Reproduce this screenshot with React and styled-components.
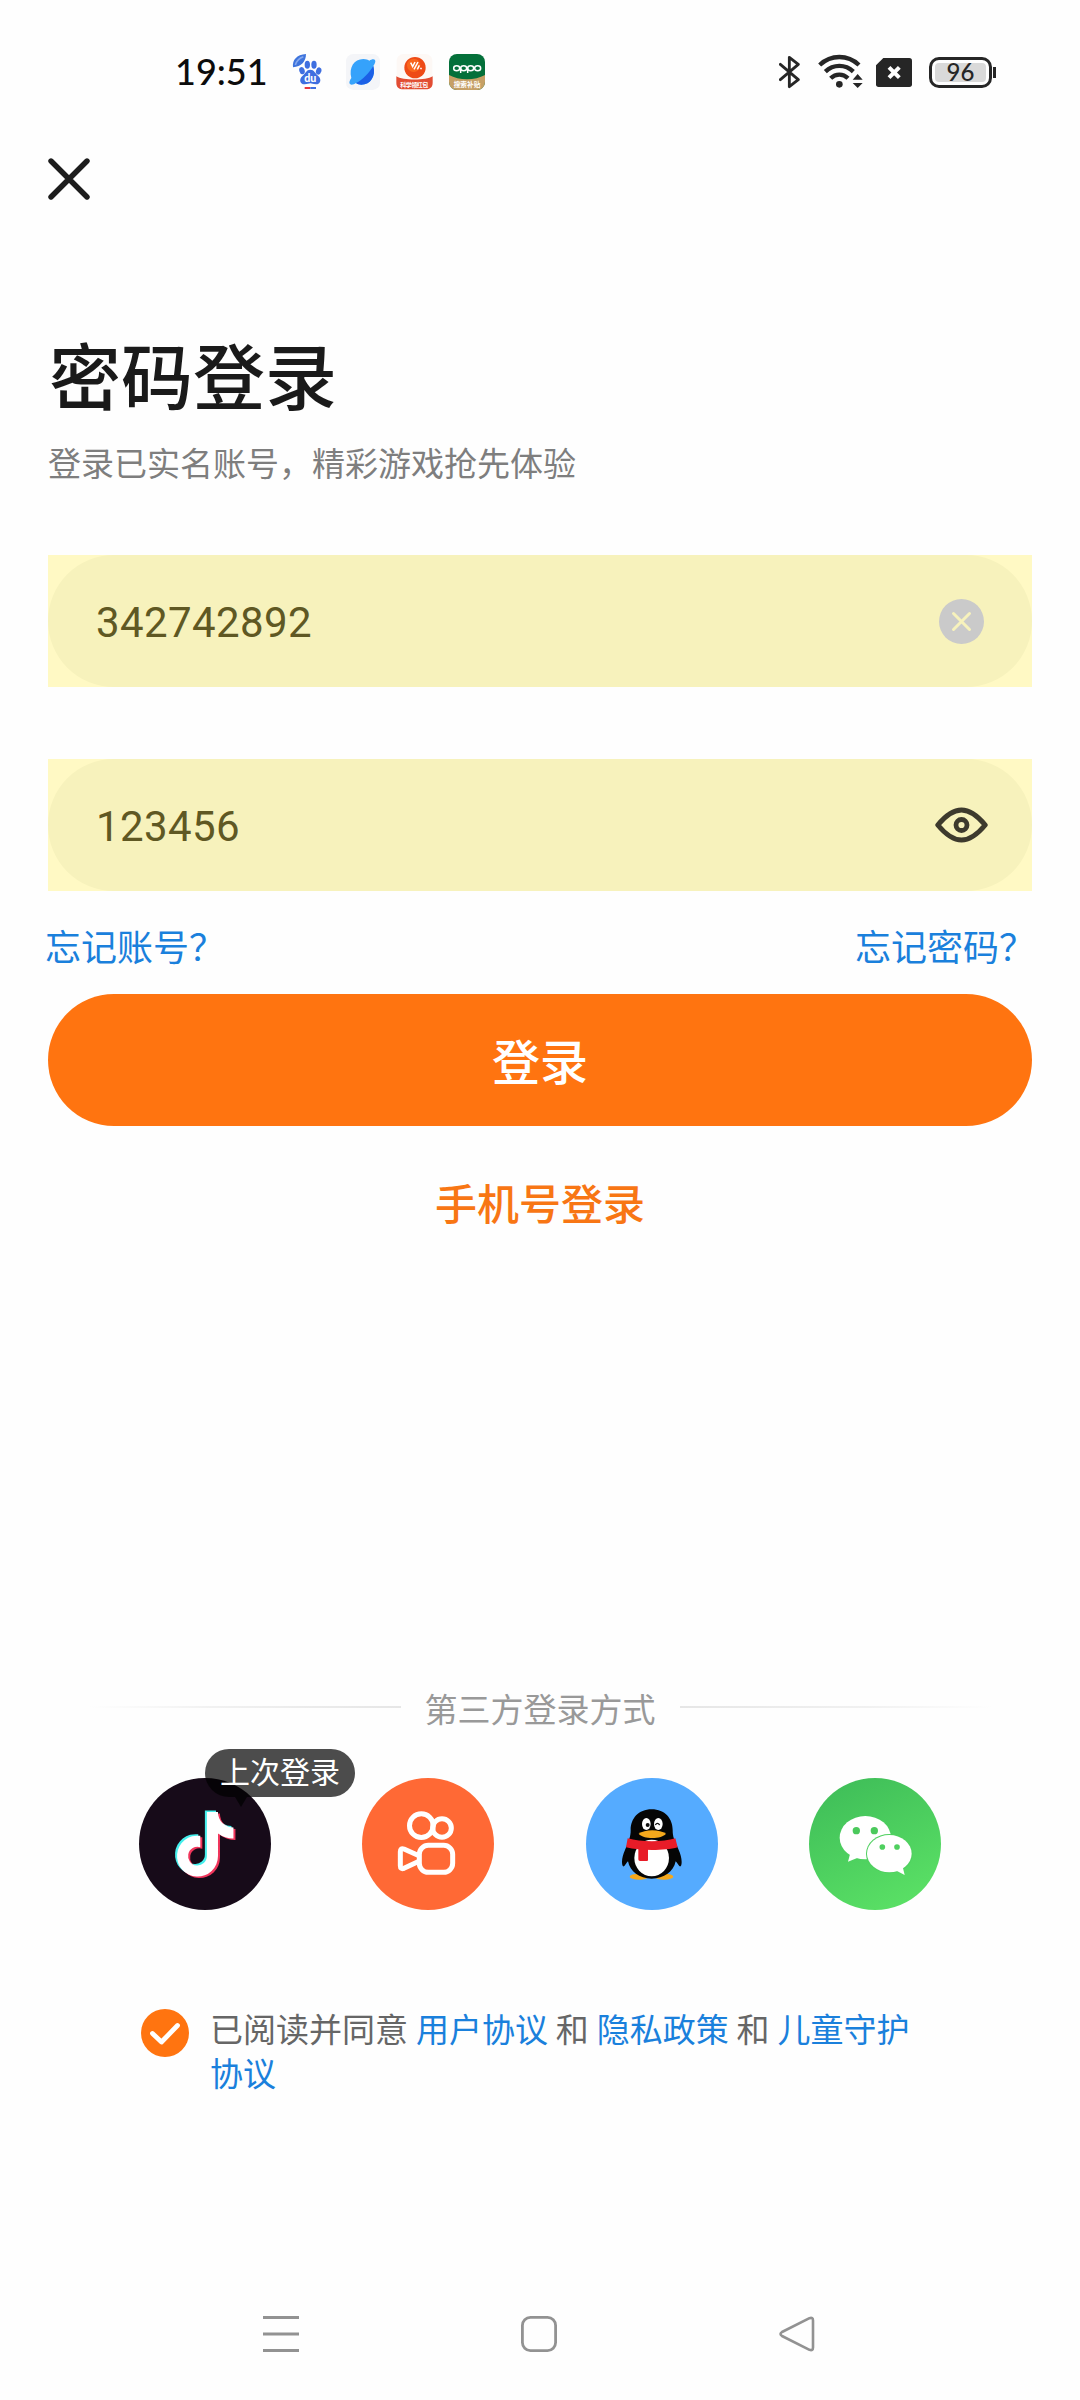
import React, { useState } from 'react';
import styled, { createGlobalStyle } from 'styled-components';

const GlobalStyle = createGlobalStyle`
  * {
    box-sizing: border-box;
  }

  body {
    margin: 0;
    background: #fefefe;
    font-family: 'Noto Sans CJK SC', sans-serif;
  }
`;

// Status bar icons
const BaiduIcon = () => (
  <svg width='30' height='36' viewBox='0 0 90 108'>
    <path d='M3 40C0 18 14 2 42 0C42 22 28 38 3 40Z' fill='#3f74dc' />
    <path d='M10 33C14 20 22 12 34 8' stroke='#86a9ee' strokeWidth='5' fill='none' />
    <g fill='#3f6fe0'>
      <ellipse cx='30' cy='50' rx='8' ry='11' transform='rotate(-18 30 50)' />
      <ellipse cx='46' cy='32' rx='8' ry='12' />
      <ellipse cx='66' cy='32' rx='8' ry='12' />
      <ellipse cx='80' cy='51' rx='8' ry='11' transform='rotate(18 80 51)' />
      <path d='M55 47C67 47 69 58 78 65C90 75 86 91 72 91C62 91 60 88 55 88C50 88 47 91 38 91C23 91 20 75 32 65C41 58 43 47 55 47Z' />
    </g>
    <text x='55' y='84' fontSize='32' fontWeight='900' fill='#fff' textAnchor='middle' fontFamily='Lato, sans-serif'>du</text>
    <path d='M38 102H55' stroke='#e5373f' strokeWidth='6' />
    <path d='M55 102H72' stroke='#3f6fe0' strokeWidth='6' />
  </svg>
);

const BrowserIcon = () => (
  <svg width='34' height='36' viewBox='0 0 102 108'>
    <rect width='102' height='108' rx='22' fill='#f4f5f8' />
    <path d='M12 90C8 86 12 78 16 72C8 40 24 16 52 15C60 15 66 18 70 20C76 16 84 14 87 18C90 22 86 30 82 36C90 66 74 92 46 92C40 92 34 90 30 87C24 91 16 94 12 90Z' fill='#35a2fb' />
    <path d='M82 36C90 66 74 92 46 92C40 92 34 90 30 87C50 78 70 56 82 36Z' fill='#1b5fe6' />
  </svg>
);

const PromoIcon = () => (
  <svg width='37' height='36' viewBox='0 0 111 108'>
    <rect x='2' width='107' height='106' rx='20' fill='#fdf8f5' />
    <circle cx='57' cy='41' r='32' fill='#ee4a16' />
    <circle cx='53' cy='34' r='20' fill='#f9661c' />
    <path d='M44 26L50 38L57 24M54 46L66 24M64 46L70 34M74 46L76 41' stroke='#fff' strokeWidth='4.5' fill='none' />
    <path d='M1 67C20 80 90 80 110 67V86C110 100 101 106 90 106H22C9 106 1 100 1 86Z' fill='#e24d33' />
    <text x='55' y='98' fontSize='18' fontWeight='700' fill='#fff' textAnchor='middle' textLength='84' fontFamily='"Noto Sans CJK SC", sans-serif'>科学领红包</text>
  </svg>
);

const OppoIcon = () => (
  <svg width='36' height='36' viewBox='0 0 108 108'>
    <defs>
      <clipPath id='oppo'>
        <rect width='108' height='108' rx='24' />
      </clipPath>
    </defs>
    <g clipPath='url(#oppo)'>
      <rect width='108' height='108' fill='#04703a' />
      <path d='M0 63C30 80 78 80 108 63V108H0Z' fill='#c6a066' />
    </g>
    <g fill='none' stroke='#fff' strokeWidth='4.5'>
      <ellipse cx='23' cy='43' rx='9' ry='7.5' />
      <ellipse cx='44' cy='43' rx='9' ry='7.5' />
      <path d='M35 43V57M56 43V57' />
      <ellipse cx='65' cy='43' rx='9' ry='7.5' />
      <ellipse cx='86' cy='43' rx='9' ry='7.5' />
    </g>
    <text x='54' y='98' fontSize='20' fontWeight='700' fill='#fff' textAnchor='middle' fontFamily='"Noto Sans CJK SC", sans-serif'>搜索补贴</text>
  </svg>
);

const BluetoothIcon = () => (
  <svg width='22' height='34' viewBox='0 0 66 102'>
    <path d='M4 28L58 74L31 95V7L58 28L4 74' fill='none' stroke='#262626' strokeWidth='8.5' strokeLinejoin='round' strokeLinecap='round' />
  </svg>
);

const WifiIcon = () => (
  <svg width='45' height='36' viewBox='0 0 135 108'>
    <g fill='none' stroke='#262626' strokeWidth='13'>
      <path d='M5 33C39 1 89 1 123 33' />
      <path d='M22 53C46 30 82 30 106 53' />
      <path d='M38 73C53 58 75 58 90 73' />
    </g>
    <circle cx='64' cy='91' r='10' fill='#262626' />
    <path d='M104 77L119 60L134 77ZM104 87L119 102L134 87Z' fill='#262626' />
  </svg>
);

const SimIcon = () => (
  <svg width='36' height='29' viewBox='0 0 108 87'>
    <path d='M22 0H100Q108 0 108 8V79Q108 87 100 87H8Q0 87 0 79V22Z' fill='#262626' />
    <path d='M39 28L70 59M70 28L39 59' stroke='#fff' strokeWidth='12' />
  </svg>
);

const CloseIcon = () => (
  <svg width='42' height='42' viewBox='0 0 42 42'>
    <path d='M3 3L39 39M39 3L3 39' stroke='#1d1d1d' strokeWidth='5.4' strokeLinecap='round' />
  </svg>
);

// Field icons
const ClearIcon = () => (
  <svg width='45' height='45' viewBox='0 0 45 45'>
    <circle cx='22.5' cy='22.5' r='22.5' fill='#cacaca' />
    <path d='M14.5 14.5L30.5 30.5M30.5 14.5L14.5 30.5' stroke='#f7f2bc' strokeWidth='3' strokeLinecap='round' />
  </svg>
);

const EyeIcon = () => (
  <svg width='53' height='36' viewBox='0 0 53 36'>
    <g fill='none' stroke='#3d3a2d' strokeLinejoin='round'>
      <path d='M2.8 18C9 10.5 17 3 26.5 3C36 3 44 10.5 50.2 18C44 25.5 36 33 26.5 33C17 33 9 25.5 2.8 18Z' strokeWidth='5' />
      <circle cx='26.5' cy='18' r='5.5' strokeWidth='4.8' />
    </g>
  </svg>
);

// Third party logos
const NOTE_PATH =
  'M448,209.91a210.06,210.06,0,0,1-122.77-39.25V349.38A162.55,162.55,0,1,1,185,188.31V278.2a74.62,74.62,0,1,0,52.23,71.18V0l88,0a121.18,121.18,0,0,0,1.86,22.17h0A122.18,122.18,0,0,0,381,102.39a121.43,121.43,0,0,0,67,20.14Z';

const DouyinLogo = () => (
  <svg width='132' height='132' viewBox='0 0 132 132'>
    <path d={NOTE_PATH} fill='#46efec' transform='translate(36 32.6) scale(0.126)' />
    <path d={NOTE_PATH} fill='#f0365c' transform='translate(40 35.6) scale(0.126)' />
    <path d={NOTE_PATH} fill='#fff' transform='translate(38 34.1) scale(0.126)' />
  </svg>
);

const KuaishouLogo = () => (
  <svg width='132' height='132' viewBox='0 0 396 396'>
    <g fill='none' stroke='#fff' strokeWidth='15' strokeLinejoin='round'>
      <circle cx='178' cy='143' r='35.5' />
      <circle cx='240' cy='150' r='28' />
      <rect x='172' y='202' width='100' height='81' rx='27' />
      <path d='M171 233L126 213Q115 209 115 221V263Q115 275 126 271L171 250' />
    </g>
  </svg>
);

const QQLogo = () => (
  <svg width='132' height='132' viewBox='0 0 396 396'>
    <ellipse cx='159' cy='296' rx='28' ry='9' fill='#f5a81c' />
    <ellipse cx='234' cy='296' rx='28' ry='9' fill='#f5a81c' />
    <path d='M197 94C237 94 260 122 260 156C260 166 261 174 264 182C272 206 287 226 287 252C287 262 284 268 280 264C276 260 273 254 269 250C263 281 234 302 197 302C160 302 132 281 126 250C122 254 119 260 115 264C111 268 108 262 108 252C108 226 124 206 130 182C133 174 134 166 134 156C134 122 157 94 197 94Z' fill='#050505' />
    <ellipse cx='197' cy='240' rx='52' ry='55' fill='#fff' />
    <path d='M125 181C165 193 230 193 268 181L275 208C235 219 163 219 120 208Z' fill='#e81c28' />
    <path d='M157 205H186V246Q186 249 183 249H162Q157 249 157 244Z' fill='#e81c28' />
    <ellipse cx='181' cy='138' rx='13' ry='18' fill='#fff' />
    <ellipse cx='217' cy='138' rx='13' ry='18' fill='#fff' />
    <circle cx='185' cy='141' r='6' fill='#111' />
    <path d='M208 141Q214 131 221 141' stroke='#111' strokeWidth='4' fill='none' />
    <path d='M158 167C175 153 222 153 240 167C228 184 170 184 158 167Z' fill='#f5a81c' />
  </svg>
);

const WechatLogo = () => (
  <svg width='132' height='132' viewBox='0 0 396 396'>
    <ellipse cx='169' cy='179' rx='77' ry='65' fill='#fff' />
    <path d='M124 225L117 251L150 238Z' fill='#fff' />
    <circle cx='142' cy='158' r='11' fill='#4bc95c' />
    <circle cx='196' cy='158' r='11' fill='#4bc95c' />
    <ellipse cx='241' cy='227' rx='70' ry='59' fill='#4fd05f' />
    <ellipse cx='241' cy='227' rx='67' ry='56' fill='#fff' />
    <path d='M258 276L287 291L280 262Z' fill='#fff' />
    <circle cx='220' cy='207' r='8.5' fill='#4fd05f' />
    <circle cx='264' cy='207' r='8.5' fill='#4fd05f' />
  </svg>
);

const providers = [
  { id: 'douyin', background: '#170b19', Logo: DouyinLogo, last: true },
  { id: 'kuaishou', background: '#ff6935', Logo: KuaishouLogo },
  { id: 'qq', background: '#55abff', Logo: QQLogo },
  { id: 'wechat', background: 'linear-gradient(155deg, #40bf59 10%, #5ae065 90%)', Logo: WechatLogo },
];

const App = () => {
  const [account, setAccount] = useState('342742892');
  const [password, setPassword] = useState('123456');
  const [visible, setVisible] = useState(true);

  return (
    <Screen>
      <GlobalStyle />

      <StatusBar>
        <Clock>19:51</Clock>
        <AppIcons>
          <BaiduIcon />
          <BrowserIcon />
          <PromoIcon />
          <OppoIcon />
        </AppIcons>
        <SystemIcons>
          <BluetoothIcon />
          <WifiIcon />
          <SimIcon />
          <Battery>
            <BatteryLevel>96</BatteryLevel>
          </Battery>
        </SystemIcons>
      </StatusBar>

      <CloseButton aria-label='关闭'>
        <CloseIcon />
      </CloseButton>

      <Title>密码登录</Title>
      <Subtitle>登录已实名账号，精彩游戏抢先体验</Subtitle>

      {/* Autofilled fields */}
      <Fields>
        <Field>
          <FieldInner>
            <Input value={account} onChange={(e) => setAccount(e.target.value)} />
            <IconButton onClick={() => setAccount('')}>
              <ClearIcon />
            </IconButton>
          </FieldInner>
        </Field>
        <Field>
          <FieldInner>
            <Input
              type={visible ? 'text' : 'password'}
              value={password}
              onChange={(e) => setPassword(e.target.value)}
            />
            <IconButton onClick={() => setVisible(!visible)}>
              <EyeIcon />
            </IconButton>
          </FieldInner>
        </Field>
      </Fields>

      <ForgotRow>
        <ForgotLink>忘记账号？</ForgotLink>
        <ForgotLink>忘记密码？</ForgotLink>
      </ForgotRow>

      <LoginButton>登录</LoginButton>
      <PhoneLogin>手机号登录</PhoneLogin>

      {/* Third party login */}
      <Divider>
        <Line $side='left' />
        <DividerText>第三方登录方式</DividerText>
        <Line $side='right' />
      </Divider>
      <Providers>
        {providers.map(({ id, background, Logo, last }) => (
          <Provider key={id} $background={background}>
            <Logo />
            {last && <LastBadge>上次登录</LastBadge>}
          </Provider>
        ))}
      </Providers>

      <Agreement>
        <Checkbox>
          <svg width='48' height='48' viewBox='0 0 48 48'>
            <path d='M11.5 24.5L20.5 33L36.5 16.5' fill='none' stroke='#fff' strokeWidth='4.8' strokeLinecap='round' strokeLinejoin='round' />
          </svg>
        </Checkbox>
        <AgreementText>
          已阅读并同意 <a>用户协议</a> 和 <a>隐私政策</a> 和 <a>儿童守护协议</a>
        </AgreementText>
      </Agreement>

      <NavBar>
        <svg width='36' height='36' viewBox='0 0 36 36'>
          <path d='M0 1.5H36M0 18H36M0 34.5H36' stroke='#929292' strokeWidth='3' />
        </svg>
        <svg width='36' height='36' viewBox='0 0 36 36'>
          <rect x='1.4' y='1.4' width='33.2' height='33.2' rx='8' fill='none' stroke='#929292' strokeWidth='2.8' />
        </svg>
        <svg width='36' height='36' viewBox='0 0 36 36'>
          <path d='M30.5 2.2L3 16Q0 18 3 20L30.5 33.8Q34 35 34 31.5V4.5Q34 1 30.5 2.2Z' fill='none' stroke='#929292' strokeWidth='2.6' strokeLinejoin='round' />
        </svg>
      </NavBar>
    </Screen>
  );
};

const Screen = styled.main`
  display: flex;
  flex-direction: column;
  width: 1080px;
  height: 2400px;
  background: #fefefe;
  overflow: hidden;
`;

// **Status bar**
const StatusBar = styled.header`
  display: flex;
  align-items: center;
  height: 144px;
  padding: 0 84px 0 175px;
`;

const Clock = styled.span`
  width: 117px;
  padding-bottom: 2px;
  font-family: Lato, sans-serif;
  font-size: 36px;
  font-weight: 500;
  color: #0c0c0c;
`;

const AppIcons = styled.div`
  display: flex;
  align-items: center;
  gap: 16px;

  svg:first-child {
    margin-right: 8px;
  }
`;

const SystemIcons = styled.div`
  display: flex;
  align-items: center;
  margin-left: auto;

  svg {
    margin-right: 17px;
  }

  svg:nth-child(2) {
    margin-right: 13px;
  }
`;

const Battery = styled.div`
  position: relative;
  width: 63px;
  height: 31px;
  padding: 3px;
  margin-right: 4px;
  border: 3px solid #262626;
  border-radius: 10px;

  &::after {
    content: '';
    position: absolute;
    top: 7px;
    right: -7px;
    width: 3px;
    height: 11px;
    background: #262626;
  }
`;

const BatteryLevel = styled.div`
  width: 100%;
  height: 100%;
  border-radius: 4px;
  background: #d9d9d9;
  font-family: Lato, sans-serif;
  font-size: 24px;
  font-weight: 500;
  line-height: 18px;
  text-align: center;
  color: #262626;
`;

// **Heading**
const CloseButton = styled.button`
  display: flex;
  align-self: flex-start;
  margin: 14px 0 0 48px;
  padding: 0;
  border: 0;
  background: none;
`;

const Title = styled.h1`
  margin: 121px 0 0 49px;
  font-size: 72px;
  font-weight: 500;
  line-height: 104px;
  color: #1a1a1a;
`;

const Subtitle = styled.p`
  margin: 13px 0 0 48px;
  font-size: 33px;
  font-weight: 400;
  line-height: 48px;
  color: #7e7e7e;
`;

// **Form**
const Fields = styled.div`
  display: flex;
  flex-direction: column;
  gap: 72px;
  margin: 69px 48px 0;
`;

const Field = styled.label`
  display: block;
  height: 132px;
  background: #fff9c4;
`;

const FieldInner = styled.div`
  display: flex;
  align-items: center;
  justify-content: space-between;
  height: 100%;
  padding: 0 40px 0 48px;
  border-radius: 66px;
  background: #f7f2bc;
`;

const Input = styled.input`
  width: 600px;
  height: 60px;
  padding: 2px 0 0;
  border: 0;
  outline: 0;
  background: none;
  font-family: Roboto, sans-serif;
  font-size: 42px;
  letter-spacing: 0.4px;
  color: #5f5823;
`;

const IconButton = styled.button`
  display: flex;
  justify-content: center;
  width: 61px;
  padding: 0;
  border: 0;
  background: none;
`;

const ForgotRow = styled.div`
  display: flex;
  justify-content: space-between;
  height: 103px;
  padding: 28px 45px 0;
`;

const ForgotLink = styled.a`
  font-size: 36px;
  font-weight: 400;
  line-height: 52px;
  color: #1a80dc;
`;

const LoginButton = styled.button`
  height: 132px;
  margin: 0 48px;
  padding: 0 0 3px;
  border: 0;
  border-radius: 66px;
  background: #ff7410;
  font-family: inherit;
  font-size: 48px;
  font-weight: 500;
  color: #fff;
`;

const PhoneLogin = styled.a`
  margin-top: 45px;
  font-size: 42px;
  font-weight: 500;
  line-height: 62px;
  text-align: center;
  color: #f87614;
`;

// **Third party login**
const Divider = styled.div`
  display: flex;
  align-items: center;
  justify-content: center;
  gap: 24px;
  height: 48px;
  margin-top: 451px;
`;

const Line = styled.span`
  width: 312px;
  height: 2px;
  margin-bottom: 2px;
  background: linear-gradient(to ${({ $side }) => $side}, #e6e6e6, #f1f1f1 60%, #fefefe);
`;

const DividerText = styled.span`
  font-size: 33px;
  font-weight: 400;
  line-height: 48px;
  color: #999;
`;

const Providers = styled.div`
  display: flex;
  justify-content: space-between;
  margin: 46px 139px 0;
`;

const Provider = styled.div`
  position: relative;
  width: 132px;
  height: 132px;
  border-radius: 50%;
  background: ${({ $background }) => $background};

  > svg {
    display: block;
  }
`;

const LastBadge = styled.span`
  position: absolute;
  top: -29px;
  left: 66px;
  width: 150px;
  height: 48px;
  border-radius: 24px;
  background: rgba(0, 0, 0, 0.7);
  font-size: 30px;
  line-height: 43px;
  text-align: center;
  color: #fff;

  /* tail */
  &::after {
    content: '';
    position: absolute;
    top: 48px;
    left: 30px;
    border: 6px solid transparent;
    border-top: 10px solid rgba(0, 0, 0, 0.7);
    border-bottom: 0;
  }
`;

// **Agreement**
const Agreement = styled.div`
  display: flex;
  align-items: flex-start;
  gap: 21px;
  margin: 96px 139px 0 141px;
`;

const Checkbox = styled.span`
  flex: none;
  width: 48px;
  height: 48px;
  margin-top: 3px;
  border-radius: 50%;
  background: #ff7410;

  svg {
    display: block;
  }
`;

const AgreementText = styled.p`
  width: 720px;
  margin: 0;
  font-size: 33px;
  font-weight: 400;
  line-height: 44px;
  word-spacing: 0.5px;
  color: #666;

  a {
    color: #1a80dc;
  }
`;

// **Navigation bar**
const NavBar = styled.nav`
  display: flex;
  justify-content: space-between;
  margin: auto 265px 48px 263px;
`;

export default App;
